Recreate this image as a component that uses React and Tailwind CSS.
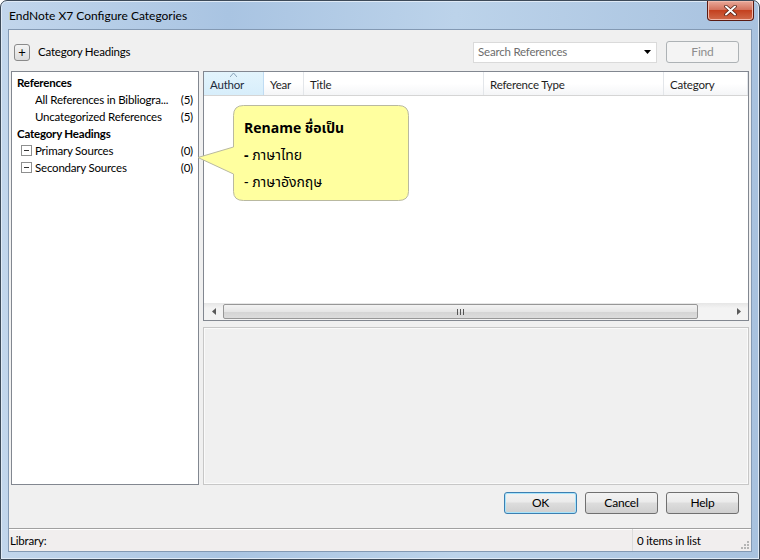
import { useState } from 'react'

const ui = { fontFamily: 'Lato, "Noto Sans", "DejaVu Sans", sans-serif' }
const thai = { fontFamily: 'Tahoma, "Noto Sans Thai", "DejaVu Sans", "Noto Sans", sans-serif' }

const columns = [
  { label: 'Author', w: 'w-[60px]', active: true },
  { label: 'Year', w: 'w-[40px]' },
  { label: 'Title', w: 'w-[180px]' },
  { label: 'Reference Type', w: 'w-[180px]' },
  { label: 'Category', w: 'flex-1' },
]

function WinButton({ children, primary, disabled }) {
  return (
    <button
      className={`w-[73px] h-[22px] rounded-[3px] border text-[12px] bg-[linear-gradient(#f2f2f2,#ebebeb_45%,#dddddd_50%,#cfcfcf)] ${
        primary ? 'border-[#3c7fb1] shadow-[inset_0_0_0_1px_#a8e4fb]' : 'border-[#707070]'
      } ${disabled ? 'text-[#8d8d8d] border-[#adb2b5] bg-[#f4f4f4] bg-none' : 'text-black'}`}
    >
      {children}
    </button>
  )
}

function TreeRow({ label, count, box, bold }) {
  if (bold) return <div className="h-[17px] pl-[5px] font-bold leading-[17px]">{label}</div>
  return (
    <div className="h-[17px] flex items-center pr-[5px] leading-[17px]">
      <div className="w-[23px] flex justify-end pr-[3px]">
        {box && (
          <div className="w-[11px] h-[11px] border border-[#8e8f8f] bg-white flex items-center justify-center">
            <div className="w-[5px] h-px bg-[#333]" />
          </div>
        )}
      </div>
      <span className="flex-1 whitespace-nowrap overflow-hidden">{label}</span>
      <span>{count}</span>
    </div>
  )
}

export default function App() {
  const [search] = useState('Search References')
  return (
    <div className="w-[760px] h-[560px] text-[11.5px] tracking-[-0.2px] text-black" style={ui}>
      <div className="w-full h-full flex flex-col rounded-t-[7px] border border-[#3d4a59] bg-[linear-gradient(90deg,#c2d6ec,#a9c4e2_30%,#bcd3ea_60%,#a8c2df)] shadow-[inset_0_0_0_1px_#dfeaf6]">
        {/* title bar */}
        <div className="h-[28px] flex items-start">
          <div className="pl-[8px] pt-[7px] text-[12px] tracking-normal leading-[16px] text-black">EndNote X7 Configure Categories</div>
          <div className="flex-1" />
          <div className="mr-[5px] w-[47px] h-[20px] rounded-b-[4px] border border-t-0 border-[#5a1a12] bg-[linear-gradient(#e9a99a,#d4735e_45%,#c4411f_50%,#d06a4a)] flex items-center justify-center shadow-[inset_0_0_0_1px_#f1b9ab]">
            <svg width="13" height="11" viewBox="0 0 13 11">
              <path d="M2 1.5 L11 9.5 M11 1.5 L2 9.5" stroke="#4a1a10" strokeWidth="3.4" strokeLinecap="round" />
              <path d="M2 1.5 L11 9.5 M11 1.5 L2 9.5" stroke="#fff" strokeWidth="2" strokeLinecap="round" />
            </svg>
          </div>
        </div>

        {/* client area */}
        <div className="flex-1 mx-[7px] mb-[7px] border border-[#8399b3] bg-[#f0f0f0] flex flex-col relative">
          {/* toolbar */}
          <div className="h-[41px] flex items-center pl-[5px] pr-[12px] pt-[3px]">
            <button className="w-[16px] h-[17px] rounded-[3px] border border-[#8a8a8a] bg-[linear-gradient(#f4f4f4,#dcdcdc)] flex items-center justify-center text-[13px] leading-none">
              +
            </button>
            <span className="ml-[8px]">Category Headings</span>
            <div className="flex-1" />
            <div className="w-[184px] h-[21px] bg-white border border-[#dadada] flex items-center pl-[4px] pr-[5px] text-[#6d6d6d]">
              <span className="flex-1">{search}</span>
              <svg width="7" height="4" viewBox="0 0 7 4">
                <path d="M0 0 H7 L3.5 4 Z" fill="#000" />
              </svg>
            </div>
            <div className="ml-[9px]">
              <WinButton disabled>Find</WinButton>
            </div>
          </div>

          {/* main */}
          <div className="flex-1 flex px-[2px] gap-[4px]">
            <div className="w-[188px] bg-white border border-[#828790] pt-[2px]">
              <TreeRow bold label="References" />
              <TreeRow label="All References in Bibliogra..." count="(5)" />
              <TreeRow label="Uncategorized References" count="(5)" />
              <TreeRow bold label="Category Headings" />
              <TreeRow box label="Primary Sources" count="(0)" />
              <TreeRow box label="Secondary Sources" count="(0)" />
            </div>

            <div className="flex-1 flex flex-col gap-[6px]">
              <div className="h-[250px] bg-white border border-[#828790] flex flex-col">
                <div className="h-[24px] flex border-b border-[#d5d5d5] bg-[linear-gradient(#ffffff,#ffffff_50%,#f4f5f7)]">
                  {columns.map((c) => (
                    <div
                      key={c.label}
                      className={`${c.w} relative flex items-center pl-[6px] pt-[2px] border-r ${
                        c.active
                          ? 'bg-[linear-gradient(#e3f4fc,#d7eefb)] border-[#c0dcf3]'
                          : 'border-[#e3e6ea]'
                      }`}
                    >
                      {c.active && (
                        <svg className="absolute left-[26px] top-[1px]" width="7" height="4" viewBox="0 0 7 4">
                          <path d="M0 4 L3.5 0 L7 4" fill="none" stroke="#8aa3b8" strokeWidth="1" />
                        </svg>
                      )}
                      <span className={c.active ? 'text-[#1c2a3a]' : 'text-[#1e1e1e]'}>{c.label}</span>
                    </div>
                  ))}
                </div>
                <div className="flex-1" />
                {/* h scrollbar */}
                <div className="h-[17px] flex items-center bg-[linear-gradient(#e6e6e6,#f3f3f3_30%,#f3f3f3)]">
                  <div className="w-[19px] flex justify-center">
                    <svg width="4" height="7" viewBox="0 0 4 7">
                      <path d="M4 0 L0 3.5 L4 7 Z" fill="#5a5a5a" />
                    </svg>
                  </div>
                  <div className="w-[475px] h-[15px] rounded-[2px] border border-[#979797] bg-[linear-gradient(#f3f3f3,#e6e6e6_50%,#d4d4d4_51%,#dcdcdc)] flex items-center justify-center gap-[2px]">
                    <div className="w-px h-[6px] bg-[#555]" />
                    <div className="w-px h-[6px] bg-[#555]" />
                    <div className="w-px h-[6px] bg-[#555]" />
                  </div>
                  <div className="flex-1" />
                  <div className="w-[19px] flex justify-center">
                    <svg width="4" height="7" viewBox="0 0 4 7">
                      <path d="M0 0 L4 3.5 L0 7 Z" fill="#5a5a5a" />
                    </svg>
                  </div>
                </div>
              </div>
              <div className="flex-1 border border-[#c7c7c7] shadow-[inset_0_0_0_1px_#fafafa] bg-[#f0f0f0]" />
            </div>
          </div>

          {/* buttons */}
          <div className="h-[43px] flex justify-end items-start pt-[7px] pr-[12px] gap-[8px]">
            <WinButton primary>OK</WinButton>
            <WinButton>Cancel</WinButton>
            <WinButton>Help</WinButton>
          </div>

          {/* status bar */}
          <div className="h-[23px] flex border-t border-[#a0a0a0] bg-[#f1eeee] shadow-[inset_0_1px_0_#ffffff]">
            <div className="w-[623px] flex items-center pl-[1px] pt-[2px]">Library:</div>
            <div className="flex-1 flex items-center pl-[4px] pt-[2px] border-l border-[#dcdcdc]">0 items in list</div>
            <div className="w-[12px] flex items-end justify-end pb-[2px] pr-[2px]">
              <svg width="8" height="8" viewBox="0 0 8 8" fill="#b5b5b5">
                <rect x="6" y="0" width="2" height="2" />
                <rect x="3" y="3" width="2" height="2" />
                <rect x="6" y="3" width="2" height="2" />
                <rect x="0" y="6" width="2" height="2" />
                <rect x="3" y="6" width="2" height="2" />
                <rect x="6" y="6" width="2" height="2" />
              </svg>
            </div>
          </div>

          {/* callout overlay */}
          <div className="absolute left-[188px] top-[75px] w-[214px] h-[97px]">
            <svg className="absolute inset-0" width="214" height="97" viewBox="0 0 214 97">
              <path
                d="M46.5 0.5 H201.5 Q211.5 0.5 211.5 10.5 V86.5 Q211.5 95.5 201.5 95.5 H46.5 Q36.5 95.5 36.5 86.5 V69 L1 52.5 L36.5 42 V10.5 Q36.5 0.5 46.5 0.5 Z"
                fill="#ffff9f"
                stroke="#b9b9a0"
                strokeWidth="1"
              />
            </svg>
            <div className="absolute left-[47px] top-[10px] text-[14px] tracking-normal leading-[27px] text-black" style={thai}>
              <div className="font-bold">Rename ชื่อเป็น</div>
              <div><span className="font-bold">-</span> ภาษาไทย</div>
              <div>- ภาษาอังกฤษ</div>
            </div>
          </div>
        </div>
      </div>
    </div>
  )
}
